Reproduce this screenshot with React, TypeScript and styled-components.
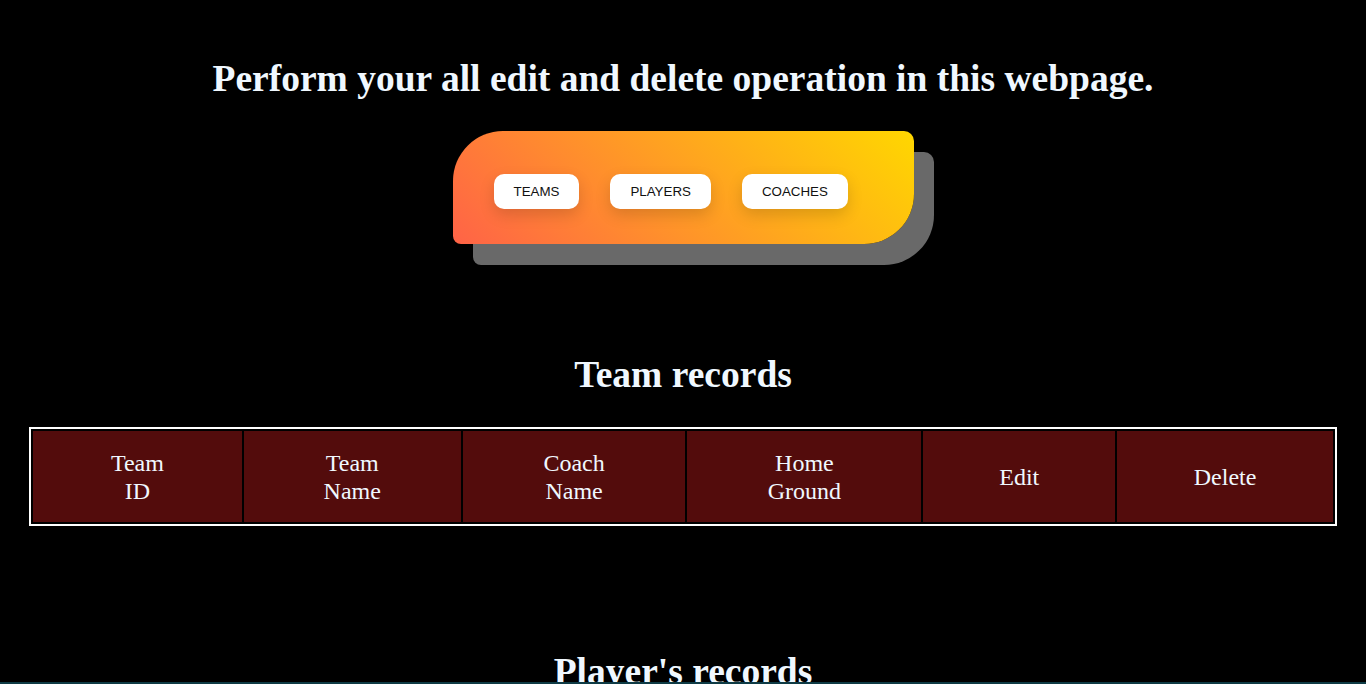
import styled, { createGlobalStyle } from "styled-components"

const GlobalStyle = createGlobalStyle`
    html, body {
        margin: 0;
        padding: 0;
        background: #000;
        color: aliceblue;
        font-family: "Liberation Serif", "Times New Roman", serif;
    }
`;

const columns = ["Team ID", "Team Name", "Coach Name", "Home Ground", "Edit", "Delete"]
const widths = [209, 217, 223, 234, 192, 216]

export default function App() {
    return (
        <>
            <GlobalStyle />
            <Page>
                <Title>Perform your all edit and delete operation in this webpage.</Title>

                <NavCard>
                    <NavButton>Teams</NavButton>
                    <NavButton>Players</NavButton>
                    <NavButton>Coaches</NavButton>
                </NavCard>

                <SectionTitle>Team records</SectionTitle>
                <Table>
                    <tbody>
                        <tr>
                            {columns.map((c, i) => (
                                <Cell key={c} style={{ width: widths[i] }}>
                                    <Label>{c}</Label>
                                </Cell>
                            ))}
                        </tr>
                    </tbody>
                </Table>

                <SectionTitle $top={125}>Player's records</SectionTitle>
                <Rule />
            </Page>
        </>
    )
}


// Page Styles
const Page = styled.div`
    display: flex;
    flex-direction: column;
    align-items: center;
    padding-top: 58px;
`;

const Title = styled.h1`
    margin: 0;
    font-size: 37.5px;
    font-weight: 700;
    line-height: 41px;
    text-align: center;
`;

const NavCard = styled.nav`
    width: 461px;
    height: 113px;
    margin-top: 32px;
    padding: 7px 41px 0;
    box-sizing: border-box;
    display: flex;
    align-items: center;
    gap: 31px;
    background: linear-gradient(45deg, tomato, gold);
    border-radius: 50px 10px 50px 8px;
    box-shadow: 20px 21px 0 dimgray;
`;

const NavButton = styled.button`
    height: 35px;
    padding: 0 20px;
    border: none;
    border-radius: 10px;
    background: #fff;
    color: #111;
    font-family: "Liberation Sans", Arial, sans-serif;
    font-size: 13.333px;
    text-transform: uppercase;
    box-shadow: 0 6px 15px rgba(0, 0, 0, 0.15);
    cursor: pointer;
`;

const SectionTitle = styled.h2<{ $top?: number }>`
    margin: ${p => p.$top ?? 110}px 0 0;
    font-size: 37.5px;
    font-weight: 700;
    line-height: 41px;
    text-align: center;
`;

const Table = styled.table`
    width: 1308px;
    margin-top: 32px;
    border: 2px solid #fff;
    border-spacing: 2px;
`;

const Cell = styled.td`
    height: 91px;
    padding: 0;
    background: #530c0c;
    color: aliceblue;
    font-size: 24px;
    text-align: center;
    vertical-align: middle;
`;

const Label = styled.span`
    display: inline-block;
    width: min-content;
    line-height: 28px;
`;

const Rule = styled.div`
    position: relative;
    align-self: stretch;
    height: 2px;
    margin-top: -10px;
    background: #0e3b45;
`;
